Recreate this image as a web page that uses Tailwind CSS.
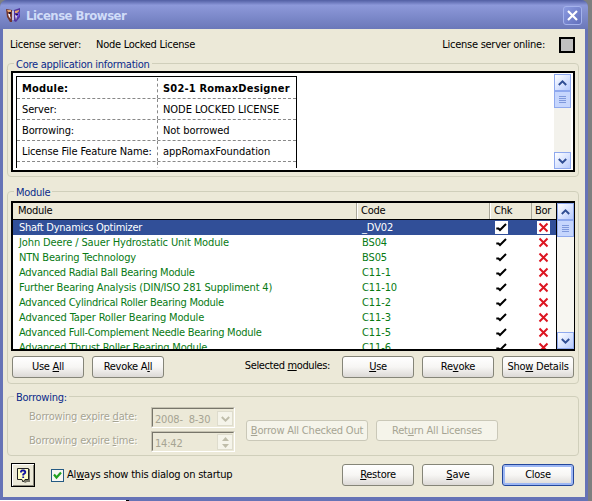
<!DOCTYPE html>
<html lang="en">
<head>
<meta charset="utf-8">
<title>License Browser</title>
<script src="https://cdn.jsdelivr.net/npm/@tailwindcss/browser@4"></script>
</head>
<body class="w-[592px] h-[501px] overflow-hidden bg-[#7d7f80] font-['DejaVu_Sans_Condensed','DejaVu_Sans',sans-serif] [font-stretch:condensed] text-[11px] leading-[14px] tracking-[-0.26px] text-black whitespace-nowrap">
<svg class="hidden">
  <symbol id="up" viewBox="0 0 9 6"><path d="M.8 5 4.5 1.4 8.2 5" fill="none" stroke="currentColor" stroke-width="2"/></symbol>
  <symbol id="down" viewBox="0 0 9 6"><path d="M.8 1 4.5 4.6 8.2 1" fill="none" stroke="currentColor" stroke-width="2"/></symbol>
  <symbol id="tick" viewBox="0 0 13 13"><path d="M1.3 7.5H3.5L5 9 11 3" fill="none" stroke="#000" stroke-width="2"/></symbol>
  <symbol id="cross" viewBox="0 0 13 13"><path d="m2.5 2.5 8 8m0-8-8 8" fill="none" stroke="#dc1420" stroke-width="2"/></symbol>
</svg>
<div class="flex flex-col w-[588px] h-[500px] bg-[#6673b6] rounded-t-[7px] overflow-hidden">
  <header class="flex items-center shrink-0 h-[29px] pl-[6px] pr-[6px] bg-linear-to-b from-[#5c69ad] from-0% via-[#8d99da] via-15% to-[#6b78b9] border-t border-[#5764a8]">
    <svg class="w-[15px] h-[15px]" viewBox="0 0 15 15"><path d="M0 1 6 2v12H4L1 9z" fill="#71372f"/><path d="m8 2 6-2v9l-4 5-2-1z" fill="#51359e"/><path d="M1 2h4v2H2zm8 1 4-1v1l-2 2H9z" fill="#e5a56d"/><path d="m2 6 2-1v3l1 3-2-2zm7 1 2 1-1 4z" fill="#f1e9f2"/><path d="m11 6 3-2-1 4-2 2z" fill="#6e4fe0"/><path d="M3 4h2v2H3zm7 2h2v1h-2z" fill="#251636"/><path d="M6 3h2v9H6z" fill="#c5bfe0"/></svg>
    <h1 class="ml-[5px] mt-[2px] text-[13px] leading-[16px] font-bold text-[#d0dcf8] tracking-[-0.5px]">License Browser</h1>
    <button class="ml-auto flex items-center justify-center w-[19px] h-[19px] mt-[1px] rounded-[3px] border border-[#a4b2eb] bg-linear-to-br from-[#8b9ae0] to-[#6270bc]"><svg class="w-[11px] h-[11px]" viewBox="0 0 11 11"><path d="m1 1 9 9m0-9-9 9" stroke="#fff" stroke-width="2.2"/></svg></button>
  </header>
  <main class="flex flex-col mx-[3px] h-[468px] pl-[4px] pr-[6px] bg-[#ece9d8]">
    <div class="flex items-center h-[34px] pl-[3px] pt-[1px] pb-[4px]">
      <span class="w-[86px]">License server:</span><span>Node Locked License</span>
      <span class="ml-auto">License server online:</span>
      <span class="ml-[14px] mr-[4px] w-[16px] h-[16px] border-2 border-black bg-[#c0c0c0]"></span>
    </div>

    <section class="h-[114px] shrink-0 border border-[#d0cfbb] rounded-[4px] px-[3px]">
      <h2 class="w-fit h-[14px] -mt-[7px] ml-[3px] px-[2px] leading-[16px] bg-[#ece9d8] text-[#0a2a8a]">Core application information</h2>
      <div class="flex h-[101px] w-[564px] border-2 border-black bg-white pt-px pb-[3px] pr-[2px] overflow-hidden">
        <div class="flex-1 pl-[3px] pt-[2px] h-[94px] overflow-hidden">
          <div class="w-[281px] border border-black h-[120px] pt-px tracking-[-0.13px]" id="info"></div>
        </div>
        <div class="flex flex-col justify-between w-[17px] h-[95px] bg-[#f3f2ec] text-[#304e94]">
          <div>
            <div class="flex items-center justify-center h-[17px] border border-[#8fa9ee] bg-linear-to-br from-white to-[#b8cbfd]"><svg class="w-[9px] h-[6px]"><use href="#up"/></svg></div>
            <div class="flex flex-col items-center justify-center gap-px h-[17px] border border-[#8fa9ee] bg-[#c6d6fd]"><i class="w-[7px] h-px bg-[#7f99dc]"></i><i class="w-[7px] h-px bg-[#7f99dc]"></i><i class="w-[7px] h-px bg-[#7f99dc]"></i><i class="w-[7px] h-px bg-[#7f99dc]"></i></div>
          </div>
          <div class="flex items-center justify-center h-[17px] border border-[#8fa9ee] bg-linear-to-br from-white to-[#b8cbfd]"><svg class="w-[9px] h-[6px]"><use href="#down"/></svg></div>
        </div>
      </div>
    </section>

    <section class="h-[193px] mt-[14px] shrink-0 border border-[#d0cfbb] rounded-[4px] px-[3px]">
      <h2 class="w-fit h-[14px] -mt-[7px] ml-[3px] px-[2px] leading-[16px] bg-[#ece9d8] text-[#0a2a8a]">Module</h2>
      <div class="flex mt-[2px] h-[150px] w-[564px] border-2 border-r border-black bg-white overflow-hidden">
        <div class="w-[544px] border-r border-black overflow-hidden">
          <div class="flex h-[17px] border-b border-black bg-[#ece9d8] leading-[15px]">
            <span class="w-[344px] pl-[5px] border-r border-[#aaa899]">Module</span>
            <span class="w-[133px] pl-[3px] border-r border-l border-l-white border-[#aaa899]">Code</span>
            <span class="w-[42px] pl-[3px] border-r border-l border-l-white border-[#aaa899]">Chk</span>
            <span class="pl-[3px]">Bor</span>
          </div>
          <div id="rows"></div>
        </div>
        <div class="flex flex-col justify-between w-[17px] bg-[#f7f6f1] text-[#304e94]">
          <div>
            <div class="flex items-center justify-center h-[17px] border border-[#8fa9ee] bg-linear-to-br from-white to-[#b8cbfd]"><svg class="w-[9px] h-[6px]"><use href="#up"/></svg></div>
            <div class="flex flex-col items-center justify-center gap-px h-[17px] border border-[#8fa9ee] bg-[#c6d6fd]"><i class="w-[7px] h-px bg-[#7f99dc]"></i><i class="w-[7px] h-px bg-[#7f99dc]"></i><i class="w-[7px] h-px bg-[#7f99dc]"></i><i class="w-[7px] h-px bg-[#7f99dc]"></i></div>
          </div>
          <div class="flex items-center justify-center h-[17px] border border-[#8fa9ee] bg-linear-to-br from-white to-[#b8cbfd]"><svg class="w-[9px] h-[6px]"><use href="#down"/></svg></div>
        </div>
      </div>
      <div class="flex items-center mt-[5px] gap-[8px] pl-[1px] w-[563px]">
        <button class="w-[72px] h-[22px] rounded-[3px] border border-[#858578] bg-linear-to-b from-white via-[#f7f6f4] to-[#dcd9d6]">Use <u>A</u>ll</button>
        <button class="w-[72px] h-[22px] rounded-[3px] border border-[#858578] bg-linear-to-b from-white via-[#f7f6f4] to-[#dcd9d6]">Revoke A<u>l</u>l</button>
        <span class="ml-auto mr-[4px] -mt-[3px] tracking-[-0.38px]">Selected <u>m</u>odules:</span>
        <button class="w-[72px] h-[22px] rounded-[3px] border border-[#858578] bg-linear-to-b from-white via-[#f7f6f4] to-[#dcd9d6]"><u>U</u>se</button>
        <button class="w-[72px] h-[22px] rounded-[3px] border border-[#858578] bg-linear-to-b from-white via-[#f7f6f4] to-[#dcd9d6]">Re<u>v</u>oke</button>
        <button class="w-[72px] h-[22px] rounded-[3px] border border-[#858578] bg-linear-to-b from-white via-[#f7f6f4] to-[#dcd9d6]">Sho<u>w</u> Details</button>
      </div>
    </section>

    <section class="h-[60px] mt-[12px] shrink-0 border border-[#d0cfbb] rounded-[4px] px-[3px] text-[#a6a493]">
      <h2 class="w-fit h-[14px] -mt-[7px] ml-[3px] px-[2px] leading-[16px] bg-[#ece9d8] text-[#0a2a8a] tracking-[-0.25px]">Borrowing:</h2>
      <div class="flex items-start mt-[3px] pl-[18px] tracking-[-0.2px]">
        <div class="w-[122px] [text-shadow:1px_1px_#fff]"><p class="mt-[3px]">Borrowing expire <u>d</u>ate:</p><p class="mt-[10px]">Borrowing expire <u>t</u>ime:</p></div>
        <div class="flex flex-col gap-[3px] w-[84px]">
          <div class="flex h-[21px] border border-[#c5c2b2] border-b-white border-r-white"><div class="flex flex-1 justify-between border border-[#77756a] border-b-[#ece9d8] border-r-[#ece9d8] pl-[2px] pt-[2px]"><span class="leading-[18px]">2008-&nbsp; 8-30</span><span class="flex items-center justify-center w-[16px] h-[15px] border border-[#dedccd] bg-[#f5f4ea] text-[#bfbdaa]"><svg class="w-[9px] h-[6px]"><use href="#down"/></svg></span></div></div>
          <div class="flex h-[21px] border border-[#c5c2b2] border-b-white border-r-white"><div class="flex flex-1 justify-between border border-[#77756a] border-b-[#ece9d8] border-r-[#ece9d8] pl-[2px] pt-[1px]"><span class="leading-[19px]">14:42</span><span class="flex flex-col items-center justify-center gap-[3px] w-[16px] h-[16px] border border-[#dedccd] bg-[#f5f4ea] text-[#bfbdaa]"><svg class="w-[7px] h-[4px]" viewBox="0 0 7 4"><path d="M0 4 3.5 0 7 4z" fill="currentColor"/></svg><svg class="w-[7px] h-[4px]" viewBox="0 0 7 4"><path d="M0 0 3.5 4 7 0z" fill="currentColor"/></svg></span></div></div>
        </div>
        <button class="mt-[13px] ml-[11px] w-[122px] h-[21px] rounded-[3px] border border-[#cac8b8] bg-[#f5f4ea] tracking-[-0.2px]"><u>B</u>orrow All Checked Out</button>
        <button class="mt-[13px] ml-[8px] w-[122px] h-[21px] rounded-[3px] border border-[#cac8b8] bg-[#f5f4ea] tracking-[-0.2px]">Ret<u>u</u>rn All Licenses</button>
      </div>
    </section>

    <footer class="flex items-center h-[24px] shrink-0 mt-[7px] pl-[4px] pr-[4px] w-[571px]">
      <button class="flex items-center justify-center w-[24px] h-[24px] border border-black bg-[#ece9d8] shadow-[inset_1px_1px_#fff,inset_-1px_-1px_#8b897c]"><svg class="w-[15px] h-[16px]" viewBox="0 0 15 16"><path d="M3 2h11v13h-3l-2 1-2-2" fill="#777568"/><path d="M1.5 1.5h11v11H9L7 15l-1-2.5H1.5z" fill="#ffffc8" stroke="#222" /><path d="M5 5.5V4.4L6 3.5h2l1.2 1v1.3L7.2 7.5V8.5M7.2 9.5v1.6" fill="none" stroke="#1414a0" stroke-width="1.8"/></svg></button>
      <span class="ml-[16px] w-[13px] h-[13px] flex items-center justify-center border border-[#245a83] bg-[#f7f7f3]"><svg class="w-[9px] h-[9px]" viewBox="0 0 9 9"><path d="m1 3.5 2.5 3L8 1.5" fill="none" stroke="#21a121" stroke-width="2.2"/></svg></span>
      <span class="ml-[3px] tracking-[-0.2px]">Al<u>w</u>ays show this dialog on startup</span>
      <span class="flex gap-[8px] ml-auto">
        <button class="w-[72px] h-[22px] rounded-[3px] border border-[#858578] bg-linear-to-b from-white via-[#f7f6f4] to-[#dcd9d6]"><u>R</u>estore</button>
        <button class="w-[72px] h-[22px] rounded-[3px] border border-[#858578] bg-linear-to-b from-white via-[#f7f6f4] to-[#dcd9d6]"><u>S</u>ave</button>
        <button class="w-[72px] h-[22px] rounded-[3px] border border-[#23479b] bg-linear-to-b from-white via-[#f7f6f4] to-[#dcd9d6] shadow-[inset_0_0_0_2px_#9db7f4]">Close</button>
      </span>
    </footer>
  </main>
</div>
<div class="flex h-px w-[588px] bg-[#6673b6]"><i class="w-[126px] bg-white"></i><i class="w-[3px] bg-black"></i></div>
<script>
const info = [['Module:','S02-1 RomaxDesigner'],['Server:','NODE LOCKED LICENSE'],['Borrowing:','Not borrowed'],['License File Feature Name:','appRomaxFoundation'],['Number of users:','']];
document.getElementById('info').innerHTML = info.map(([a,b],i) => `<div class="flex h-[21px] border-b border-dashed border-[#888] leading-[21px] ${i ? '' : 'font-bold tracking-[0.2px]'}"><span class="w-[141px] pl-[5px] border-r border-dashed border-[#888]">${a}</span><span class="pl-[5px] ${i ? 'tracking-[-0.04px]' : ''}">${b}</span></div>`).join('');
const rows = [['Shaft Dynamics Optimizer','_DV02'],['John Deere / Sauer Hydrostatic Unit Module','BS04','tracking-[-0.12px]'],['NTN Bearing Technology','BS05','tracking-[-0.17px]'],['Advanced Radial Ball Bearing Module','C11-1'],['Further Bearing Analysis (DIN/ISO 281 Suppliment 4)','C11-10','tracking-[-0.16px]'],['Advanced Cylindrical Roller Bearing Module','C11-2'],['Advanced Taper Roller Bearing Module','C11-3','tracking-[-0.15px]'],['Advanced Full-Complement Needle Bearing Module','C11-5'],['Advanced Thrust Roller Bearing Module','C11-6','tracking-[-0.2px]']];
document.getElementById('rows').innerHTML = rows.map(([a,b,t = ''],i) => `<div class="flex items-center h-[15px] pl-[6px] ${i ? 'text-[#087a14]' : 'bg-[#314f98] text-white'}"><span class="w-[343px] ${t}">${a}</span><span class="w-[133px] tracking-[-0.1px]">${b}</span><svg class="w-[13px] h-[13px] bg-white"><use href="#tick"/></svg><svg class="ml-[29px] w-[13px] h-[13px] bg-white"><use href="#cross"/></svg></div>`).join('');
</script>
</body>
</html>
